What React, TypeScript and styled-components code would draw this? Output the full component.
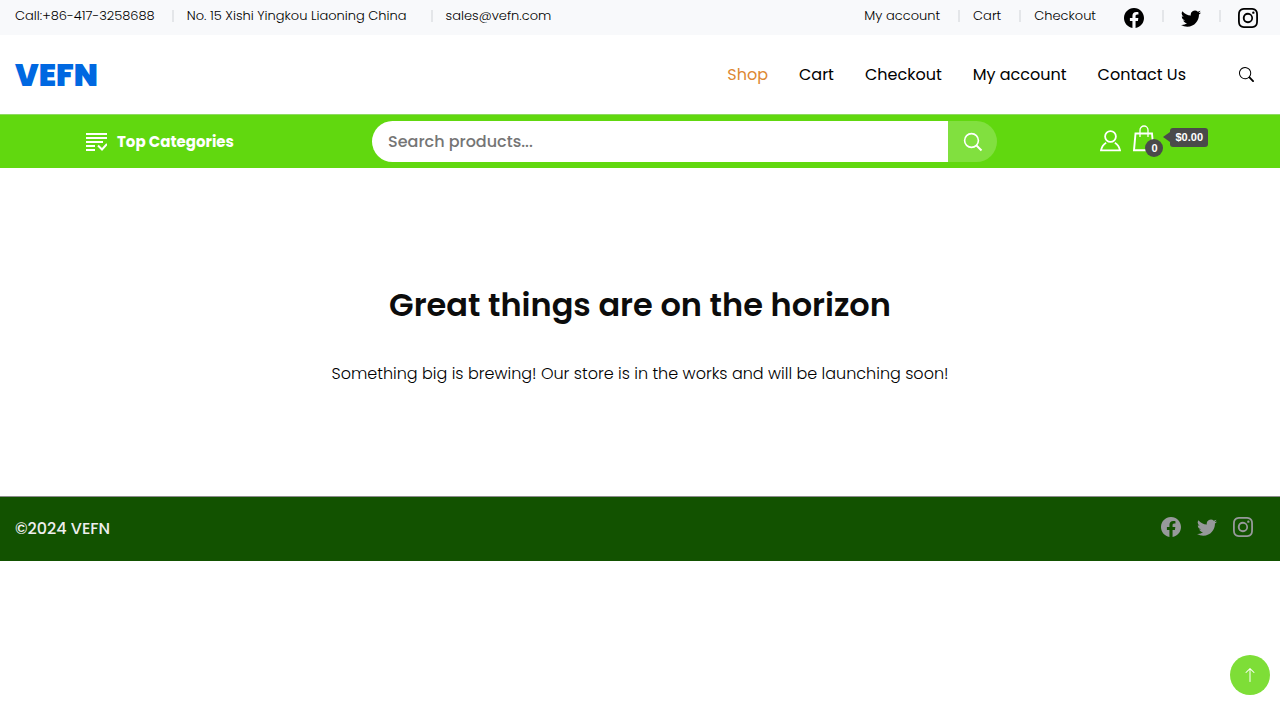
import React from "react";
import styled, { createGlobalStyle } from "styled-components";
import { BsFacebook, BsTwitter, BsInstagram, BsSearch, BsArrowUp } from "react-icons/bs";

const GlobalStyle = createGlobalStyle`
  *, *::before, *::after { box-sizing: border-box; }
  body {
    margin: 0;
    background: #fff;
    color: #000;
    font-family: Poppins, Inter, "Liberation Sans", sans-serif;
    font-size: 16px;
    line-height: 24px;
  }
  a { color: inherit; text-decoration: none; }
  ul { list-style: none; margin: 0; padding: 0; }
  svg { display: block; }
`;

const TopBar = styled.div`
  display: flex;
  justify-content: space-between;
  height: 35px;
  padding: 6px 22px 0 15px;
  background: #f8f9fb;
  font-size: 13px;
  font-weight: 300;
  line-height: 20px;
`;

const TopList = styled.ul`
  display: flex;
  align-items: flex-start;
`;

const TopItem = styled.li<{ $before?: number }>`
  display: flex;
  white-space: nowrap;

  &:not(:first-child)::before {
    content: "";
    width: 2px;
    height: 12px;
    margin: 4px 13px 0 ${(p) => p.$before ?? 18}px;
    background: #e4e6e9;
  }
`;

const SocialList = styled(TopList)`
  margin-left: 28px;
`;

const SocialItem = styled(TopItem)`
  svg { margin-top: 2px; }
  &:not(:first-child)::before { margin-right: 17px; }
`;

const Header = styled.header`
  display: flex;
  align-items: center;
  justify-content: space-between;
  height: 79px;
  padding: 0 26px 0 15px;
`;

const Logo = styled.a`
  color: #0068e1;
  font-size: 31px;
  font-weight: 900;
  line-height: 40px;
`;

const MainNav = styled.nav`
  display: flex;
  align-items: center;
`;

const NavList = styled.ul`
  display: flex;
  gap: 31px;
  margin-right: 53px;
`;

const NavLink = styled.a<{ $active?: boolean }>`
  color: ${(p) => (p.$active ? "#dd8833" : "#000")};
`;

const IconButton = styled.button`
  display: flex;
  padding: 0;
  border: 0;
  background: none;
  color: inherit;
  cursor: pointer;
`;

const ShopBar = styled.div`
  display: grid;
  grid-template-columns: 286px 1fr auto;
  align-items: center;
  height: 54px;
  padding: 0 72px 0 86px;
  border-top: 1px solid #8fda62;
  background: #61d80f;
  color: #fff;
`;

const Categories = styled(IconButton)`
  align-items: center;
  gap: 10px;
  font: inherit;
  font-size: 15px;
  font-weight: 700;
`;

const SearchForm = styled.form`
  display: flex;
  height: 41px;
  margin-right: 103px;
  overflow: hidden;
  border-radius: 21px;
`;

const SearchInput = styled.input`
  flex: 1;
  min-width: 0;
  padding: 0 16px;
  border: 0;
  outline: 0;
  background: #fff;
  color: #222;
  font: inherit;
  font-weight: 500;
  &::placeholder { color: #757575; opacity: 1; }
`;

const SearchSubmit = styled(IconButton)`
  align-items: center;
  justify-content: center;
  width: 49px;
  background: #81e03f;
`;

const Actions = styled.div`
  display: flex;
  align-items: flex-end;
  padding-bottom: 6px;
`;

const CartLink = styled.a`
  position: relative;
  display: flex;
  align-items: center;
  margin-left: 12px;
`;

const CartCount = styled.span`
  position: absolute;
  left: 12px;
  top: 14px;
  width: 18px;
  height: 18px;
  border-radius: 50%;
  background: #4a4a4a;
  font-family: "Liberation Sans", sans-serif;
  font-size: 11px;
  font-weight: 700;
  line-height: 18px;
  text-align: center;
`;

const CartTotal = styled.span`
  position: relative;
  margin: 0 0 2px 15px;
  padding: 0 5px;
  border-radius: 3px;
  background: #4a4a4a;
  font-family: "Liberation Sans", sans-serif;
  font-size: 11px;
  font-weight: 700;
  line-height: 19px;

  &::before {
    content: "";
    position: absolute;
    left: -7px;
    top: 4px;
    border: 5px solid transparent;
    border-width: 5px 7px 5px 0;
    border-right-color: #4a4a4a;
  }
`;

const Notice = styled.main`
  padding: 113px 24px 108px;
  text-align: center;
`;

const Title = styled.h1`
  margin: 0;
  color: #0c0c0c;
  font-size: 32px;
  font-weight: 600;
  line-height: 48px;
`;

const Message = styled.p`
  margin: 31px 0 0;
  font-weight: 300;
  line-height: 28px;
`;

const Footer = styled.footer`
  display: flex;
  align-items: center;
  justify-content: space-between;
  height: 65px;
  padding: 0 27px 0 15px;
  border-top: 1px solid #8c8c8c;
  background: #125200;
  color: #eee;
  font-weight: 500;
`;

const FooterSocial = styled.ul`
  display: flex;
  gap: 16px;
  padding-bottom: 4px;
  color: #97999b;
`;

const BackToTop = styled.button`
  position: fixed;
  right: 10px;
  bottom: 25px;
  display: flex;
  align-items: center;
  justify-content: center;
  width: 40px;
  height: 40px;
  padding: 0;
  border: 0;
  border-radius: 50%;
  background: #7ede37;
  color: #fff;
  cursor: pointer;
`;

const contacts = [
  { text: "Call:+86-417-3258688" },
  { text: "No. 15 Xishi Yingkou Liaoning China", before: 17 },
  { text: "sales@vefn.com", before: 24 },
];
const accountLinks = ["My account", "Cart", "Checkout"];
const navLinks = ["Shop", "Cart", "Checkout", "My account", "Contact Us"];
const socials = [
  { name: "Facebook", Icon: BsFacebook },
  { name: "Twitter", Icon: BsTwitter },
  { name: "Instagram", Icon: BsInstagram },
];

const ListCheckIcon = () => (
  <svg width="21" height="19" viewBox="0 0 21 19" fill="none" stroke="currentColor" strokeWidth="2" aria-hidden="true">
    <path d="M0 2h21M0 6h21M0 10h17M0 14h9M0 18h9" />
    <path d="M12 13.5l4 4 5-5.5" />
  </svg>
);

const UserIcon = () => (
  <svg width="21" height="22" viewBox="0 0 21 22" fill="none" stroke="currentColor" strokeWidth="1.8" aria-hidden="true">
    <circle cx="10.5" cy="6.5" r="5.4" />
    <path d="M6.2 12.8C3.6 14.2 1.7 17 1 20.3h19c-.7-3.3-2.6-6.1-5.2-7.5" />
  </svg>
);

const BagIcon = () => (
  <svg width="22" height="27" viewBox="0 0 22 27" fill="none" stroke="currentColor" aria-hidden="true">
    <path d="M2.5 8.5h16.5l1.500 16.800H1z" strokeWidth="1.9" />
    <path d="M7 12V5a4 4 0 0 1 8 0v7" strokeWidth="1.3" />
  </svg>
);

export default function App() {
  return (
    <>
      <GlobalStyle />
      <TopBar>
        <TopList>
          {contacts.map(({ text, before }) => (
            <TopItem key={text} $before={before}>{text}</TopItem>
          ))}
        </TopList>
        <TopList as="div">
          <TopList>
            {accountLinks.map((text) => (
              <TopItem key={text}><a href="#">{text}</a></TopItem>
            ))}
          </TopList>
          <SocialList>
            {socials.map(({ name, Icon }) => (
              <SocialItem key={name}>
                <a href="#" aria-label={name}><Icon size={20} /></a>
              </SocialItem>
            ))}
          </SocialList>
        </TopList>
      </TopBar>
      <Header>
        <Logo href="#">VEFN</Logo>
        <MainNav>
          <NavList>
            {navLinks.map((text, i) => (
              <li key={text}><NavLink href="#" $active={i === 0}>{text}</NavLink></li>
            ))}
          </NavList>
          <IconButton type="button" aria-label="Search"><BsSearch size={15} /></IconButton>
        </MainNav>
      </Header>
      <ShopBar>
        <Categories type="button"><ListCheckIcon />Top Categories</Categories>
        <SearchForm role="search" onSubmit={(e) => e.preventDefault()}>
          <SearchInput type="search" placeholder="Search products..." aria-label="Search products" />
          <SearchSubmit type="submit" aria-label="Search">
            <svg width="20" height="20" viewBox="0 0 20 20" fill="none" stroke="currentColor" strokeWidth="1.6" aria-hidden="true">
              <circle cx="8.5" cy="8.5" r="6.9" />
              <path d="M13.5 13.5l5 5" strokeWidth="2" />
            </svg>
          </SearchSubmit>
        </SearchForm>
        <Actions>
          <a href="#" aria-label="Account"><UserIcon /></a>
          <CartLink href="#">
            <BagIcon />
            <CartCount>0</CartCount>
            <CartTotal>$0.00</CartTotal>
          </CartLink>
        </Actions>
      </ShopBar>
      <Notice>
        <Title>Great things are on the horizon</Title>
        <Message>Something big is brewing! Our store is in the works and will be launching soon!</Message>
      </Notice>
      <Footer>
        <span>©2024 VEFN</span>
        <FooterSocial>
          {socials.map(({ name, Icon }) => (
            <li key={name}><a href="#" aria-label={name}><Icon size={20} /></a></li>
          ))}
        </FooterSocial>
      </Footer>
      <BackToTop type="button" aria-label="Back to top"><BsArrowUp size={16} /></BackToTop>
    </>
  );
}
